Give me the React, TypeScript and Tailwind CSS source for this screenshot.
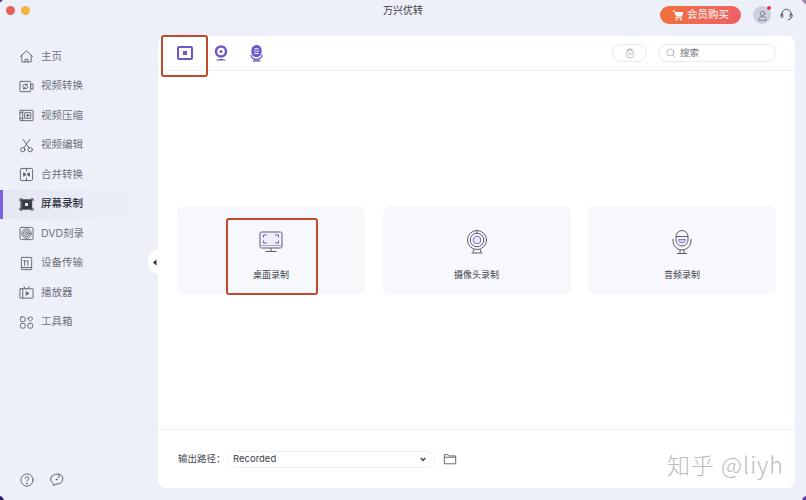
import React from "react";

const S = ({ size = 16, children, className = "" }: { size?: number; children: React.ReactNode; className?: string }) => (
  <svg width={size} height={size} viewBox="0 0 16 16" fill="none" stroke="currentColor" strokeWidth="1" strokeLinecap="round" strokeLinejoin="round" className={className}>
    {children}
  </svg>
);

const icons: Record<string, React.ReactNode> = {
  home: <><path d="M1.500 8 8 2l6.500 6M3 7v6.800h10V7" /><path d="M6.500 13.800v-3h3v3" /></>,
  convert: <><rect x="1" y="2.500" width="11.500" height="11" rx="1" /><path d="M12.500 6.500 15 5v6l-2.500-1.500M4 8a2.500 2.500 0 0 1 4.500-1.500M9.500 8A2.500 2.500 0 0 1 5 9.500M8.500 5v1.700H6.900M5 11V9.300h1.600" /></>,
  compress: <><rect x="1" y="2.500" width="14" height="11" rx=".5" /><path d="M4 2.500v11" /><path d="M1 5h3M1 11h3" /><rect x="6.500" y="5" width="6" height="6" /><path d="m9 7 2 1-2 1z" fill="currentColor" /></>,
  edit: <><circle cx="4" cy="12.500" r="2.300" /><circle cx="12" cy="12.500" r="2.300" /><path d="M5.300 10.600 11.500 1.500M10.700 10.600 4.500 1.500" /></>,
  merge: <><rect x="1.500" y="1.500" width="13" height="13" rx="1.500" /><path d="M8 1.500v3M8 11.500v3M5 6.500v3M11 6.500v3" /><path d="m5.500 6.500 2 1.500-2 1.500zM10.500 6.500l-2 1.500 2 1.500z" fill="currentColor" /></>,
  screen: <><rect x="2.500" y="3" width="11" height="10" fill="currentColor" /><rect x="6.500" y="6.500" width="3" height="3" fill="#fff" stroke="none" /><path d="M1 4V2h2M13 2h2v2M15 12v2h-2M3 14H1v-2" /></>,
  dvd: <><rect x="1" y="1.500" width="14" height="13" rx="1.500" /><circle cx="8" cy="8" r="5" /><circle cx="8" cy="8" r="3.200" /><circle cx="8" cy="8" r="1.300" /></>,
  device: <><rect x="2.500" y="1.500" width="11" height="13" rx=".8" /><path d="M2.500 12.300h11M6 5v5M5 5h2M9.500 5v5M9.500 5l-1 1" /></>,
  player: <><rect x="1" y="4" width="14" height="10" rx=".5" /><path d="M4 4v10M5 1.500 7 4M11 1.500 9 4" /><path d="m8 7.300 2.500 1.700L8 10.700z" fill="currentColor" /></>,
  tools: <><rect x="1.500" y="2" width="5" height="5" rx="1.500" /><path d="M9.500 3.500c0-1.800 5-1.800 5 0 0 1.500-2.500 3.500-2.500 3.500s-2.500-2-2.500-3.500z" /><rect x="1.500" y="9" width="5" height="5" rx="1.500" /><rect x="9.500" y="9" width="5" height="5" rx="1.500" /></>,
};

const nav = [
  ["home", "主页"],
  ["convert", "视频转换"],
  ["compress", "视频压缩"],
  ["edit", "视频编辑"],
  ["merge", "合并转换"],
  ["screen", "屏幕录制"],
  ["dvd", "DVD刻录"],
  ["device", "设备传输"],
  ["player", "播放器"],
  ["tools", "工具箱"],
];

const Monitor = () => (
  <svg width="24" height="22" viewBox="0 0 24 22" fill="none" stroke="#5a5e6c" strokeWidth="1">
    <rect x="1" y="1" width="22" height="16" rx="1.500" fill="#eef0f8" />
    <path d="M1 14.500h22" stroke="#a6aabb" />
    <path d="M4.500 6.500V4H8M16 4h3.500v2.500M19.500 9.500V12H16M8 12H4.500V9.500" stroke="#6a5acd" />
    <path d="M12 17v3M6.500 20.500h11" />
  </svg>
);

const Webcam = () => (
  <svg width="22" height="24" viewBox="0 0 22 24" fill="none" stroke="#5a5e6c" strokeWidth="1">
    <circle cx="11" cy="10" r="9.500" />
    <circle cx="11" cy="10" r="6.800" />
    <circle cx="11" cy="10" r="3.800" stroke="#7a68d8" fill="#eceaf9" />
    <path d="M11 .500v2.700M8 19l-1 3.500M14 19l1 3.500M5.500 23h11" />
  </svg>
);

const Mic = () => (
  <svg width="20" height="24" viewBox="0 0 20 24" fill="none" stroke="#5a5e6c" strokeWidth="1">
    <rect x="4" y=".500" width="12" height="15.500" rx="6" />
    <path d="M4 6.500h12" />
    <path d="M6.500 9.500h7a3.500 3.500 0 0 1-7 0z" fill="#d5d1f0" stroke="#8a7ad8" />
    <path d="M1 9v2a9 9 0 0 0 18 0V9M8 20v3M12 20v3M5 23.500h10" />
  </svg>
);

const Card = ({ icon, label }: { icon: React.ReactNode; label: string }) => (
  <div className="flex h-[88px] flex-col items-center rounded-md bg-[#f7f8fc] pt-[23px]">
    <div className="flex h-[26px] items-center justify-center">{icon}</div>
    <div className="mt-[14px] text-[9px] leading-[12px] text-[#3c3f48]">{label}</div>
  </div>
);

export default function App() {
  return (
    <div className="relative flex h-[500px] w-[806px] flex-col overflow-hidden bg-[#eef0f9] font-['Inter','Noto_Sans_CJK_SC',sans-serif]">
      <header className="relative flex h-[36px] shrink-0 items-start">
        <div className="ml-[6px] mt-[6px] flex gap-[6px]">
          <span className="h-[9px] w-[9px] rounded-full bg-[#e9605a]" />
          <span className="h-[9px] w-[9px] rounded-full bg-[#f2b544]" />
        </div>
        <div className="absolute left-0 right-0 top-[3px] text-center text-[10px] leading-[14px] text-[#3a3a44]">万兴优转</div>
        <div className="ml-auto mr-[13px] mt-[6px] flex items-start">
          <button className="flex h-[18px] w-[81px] items-center justify-center gap-[3px] rounded-full bg-gradient-to-r from-[#f0703a] to-[#ee6065] text-[10.500px] text-white">
            <svg width="12" height="12" viewBox="0 0 16 16" fill="#fff">
              <path d="M1 2h2.500l.6 2H15l-1.500 6H5.500L3 3.500H1z" />
              <rect x="4.500" y="11" width="9" height="1.200" />
              <circle cx="6" cy="14" r="1.300" />
              <circle cx="12" cy="14" r="1.300" />
            </svg>
            会员购买
          </button>
          <div className="relative ml-[12px] flex h-[18px] w-[18px] items-center justify-center rounded-full bg-[#ccd0dc] text-[#5f6472]">
            <S size={11}><circle cx="8" cy="5" r="3.200" /><path d="M2.500 14.500c0-3.500 2.500-5 5.500-5s5.500 1.500 5.500 5z" /></S>
            <span className="absolute right-[0px] top-[0px] h-[4px] w-[4px] rounded-full bg-[#e0354a]" />
          </div>
          <div className="ml-[9px] mt-[2px] text-[#3a3d48]">
            <S size={13}><path d="M2.500 9V7a5.500 5.500 0 0 1 11 0v2" /><rect x="1" y="7.500" width="2.500" height="4" rx="1" /><rect x="12.500" y="7.500" width="2.500" height="4" rx="1" /><path d="M13.500 11.500c0 2-1.500 3-3.500 3" /></S>
          </div>
        </div>
      </header>

      <div className="flex min-h-0 flex-1 pb-[12px] pr-[11px]">
        <aside className="relative flex w-[158px] shrink-0 flex-col">
          <nav className="mt-[6px] flex flex-col">
            {nav.map(([key, label]) => {
              const active = key === "screen";
              return (
                <div
                  key={key}
                  className={`relative flex h-[29.500px] items-center pl-[19px] text-[10.500px] ${active ? "bg-gradient-to-r from-[#e4e6f2] to-[#eef0f9] font-medium text-[#2e3038]" : "text-[#6e717c]"}`}
                >
                  {active && <span className="absolute bottom-0 left-0 top-0 w-[3px] bg-[#7b62dc]" />}
                  <S size={15} className={active ? "text-[#3a3d48]" : "text-[#5f626d]"}>{icons[key]}</S>
                  <span className="ml-[7px]">{label}</span>
                </div>
              );
            })}
          </nav>
          <div className="mt-auto flex items-center gap-[15px] pb-[1px] pl-[20px] text-[#565964]">
            <S size={14}><circle cx="8" cy="8" r="7" /><path d="M6 6.300a2 2 0 1 1 3 1.700c-.7.400-1 .8-1 1.700" /><circle cx="8" cy="12" r=".3" /></S>
            <S size={15}><path d="M3 4.500c3-3 9-3 11 0 1.500 2.500.5 6-2 7.500-1.500.8-3 1-4.500.8L5 14.500l-.3-2.300C1.500 10.500 1 7 3 4.500z" /><path d="M10 2c1 1.500 1 3 .5 4" /><circle cx="8" cy="8" r=".5" fill="currentColor" /></S>
          </div>
          <div className="absolute right-0 top-[214px] flex h-[24px] w-[10px] items-center justify-center rounded-l-full bg-white">
            <svg width="6" height="7" viewBox="0 0 6 7" fill="#2e3038" className="ml-[3px]"><path d="M4.500 .500 1 3.500l3.500 3z" /></svg>
          </div>
        </aside>

        <main className="flex min-w-0 flex-1 flex-col rounded-lg bg-white">
          <div className="flex h-[35px] shrink-0 items-center border-b border-[#f1f2f6] pl-[19px] pr-[19px]">
            <div className="flex items-center gap-[20px] text-[#6a58c8]">
              <svg width="16" height="14" viewBox="0 0 16 14" fill="none">
                <rect x="1" y="1" width="14" height="12" stroke="#6a58c8" strokeWidth="2" rx="1" />
                <rect x="6" y="5" width="4" height="4" fill="#6a58c8" />
              </svg>
              <svg width="16" height="16" viewBox="0 0 16 16" fill="none">
                <circle cx="8" cy="6.500" r="5" stroke="#6a58c8" strokeWidth="2.500" />
                <circle cx="8" cy="6.500" r="1.500" fill="#6a58c8" />
                <path d="M3 15.500c1-2 9-2 10 0z" fill="#6a58c8" />
              </svg>
              <svg width="13" height="18" viewBox="0 0 14 18" fill="none" className="ml-px">
                <rect x="1.500" y="0.500" width="11" height="13" rx="5.500" fill="#6a58c8" />
                <path d="M4.500 4.500h5M4.500 7h5M4.500 9.500h5" stroke="#fff" />
                <path d="M1 11c0 6.500 12 6.500 12 0" stroke="#6a58c8" strokeWidth="1.500" />
                <path d="M3 17.500h8" stroke="#6a58c8" strokeWidth="1.500" />
              </svg>
            </div>
            <div className="ml-auto flex items-center gap-[11px]">
              <div className="flex h-[18px] w-[35px] items-center justify-center rounded-full border border-[#e9eaf0] text-[#9a9da8]">
                <S size={10}><rect x="3" y="3.500" width="10" height="11.500" rx="1" /><path d="M5.500 3.500V1.500h5v2M6 7.500l4 4M10 7.500l-4 4" /></S>
              </div>
              <div className="flex h-[18px] w-[118px] items-center rounded-full border border-[#e9eaf0] pl-[7px] text-[9.500px] text-[#74777f]">
                <S size={10} className="text-[#8c8f98]"><circle cx="7" cy="7" r="5.500" /><path d="m11 11 3 3" /></S>
                <span className="ml-[4px]">搜索</span>
              </div>
            </div>
          </div>

          <div className="flex flex-1 flex-col justify-center border-b border-[#f1f2f6] px-[19px] pb-[1px]">
            <div className="grid grid-cols-3 gap-x-[17.500px]">
              <Card icon={<Monitor />} label="桌面录制" />
              <Card icon={<Webcam />} label="摄像头录制" />
              <Card icon={<Mic />} label="音频录制" />
            </div>
          </div>

          <div className="flex h-[58px] shrink-0 items-center pl-[20px] text-[9.500px] text-[#4a4c55]">
            <span className="w-[49px]">输出路径：</span>
            <div className="flex h-[17px] w-[208px] items-center justify-between rounded-full border border-[#eff0f4] pl-[5px] pr-[8px] text-[#3c3e46]">
              <span>Recorded</span>
              <svg width="6" height="5" viewBox="0 0 6 5" fill="none" stroke="#3c3e46" strokeWidth="1.300"><path d="m.8 1 2.200 2.500L5.200 1" /></svg>
            </div>
            <div className="ml-[8px] text-[#565964]">
              <S size={14}><path d="M1.500 13V3h4l1 1.500h8V13z" /><path d="M1.500 6h13" /></S>
            </div>
          </div>
        </main>
      </div>

      <div className="absolute left-[161px] top-[35px] h-[42px] w-[47px] rounded-[3px] border-2 border-[#c4492b]" />
      <div className="absolute left-[226px] top-[218px] h-[77px] w-[92px] rounded-[3px] border-2 border-[#c4492b]" />
      <div className="absolute left-[667px] top-[449px] text-[23px] leading-[30px] tracking-[1px] text-[#bcbcc0] font-light font-['Noto_Sans_CJK_SC','Inter',sans-serif]">知乎 @liyh</div>

      <div className="absolute -left-[7px] -top-[7px] h-[10px] w-[10px] rounded-full bg-[#5a3a9a]" />
      <div className="absolute -bottom-[6px] -left-[6px] h-[10px] w-[10px] rounded-full bg-[#2d1f6a]" />
      <div className="absolute -right-[6px] -top-[6px] h-[10px] w-[10px] rounded-full bg-[#9a8aa8]" />
      <div className="absolute -bottom-[6px] -right-[6px] h-[10px] w-[10px] rounded-full bg-[#5a3a9a]" />
    </div>
  );
}
